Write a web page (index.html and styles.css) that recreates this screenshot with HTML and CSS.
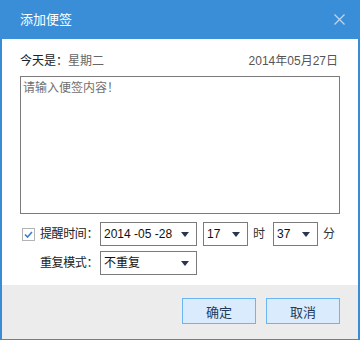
FILE: index.html
```html
<!DOCTYPE html>
<html lang="zh-CN">
<head>
  <meta charset="UTF-8" />
  <meta name="viewport" content="width=device-width, initial-scale=1.0"/>
  <title>添加便签</title>
  <link rel="stylesheet" href="styles.css">
</head>
<body>
  <div class="dialog">
    <div class="titleBar">
      <span class="titleText">添加便签</span>
      <svg class="closeIcon" width="11" height="11" viewBox="0 0 11 11">
        <path d="M0.5 0.5 L10.5 10.5 M10.5 0.5 L0.5 10.5" stroke="#bcd8f4" stroke-width="1.2" fill="none"/>
      </svg>
    </div>

    <div class="content">
      <div class="todayRow">
        <span><span class="todayLabel">今天是：</span><span class="weekday">星期二</span></span>
        <span class="todayDate">2014年05月27日</span>
      </div>

      <textarea class="noteInput" placeholder="请输入便签内容！"></textarea>

      <div class="formRow">
        <span class="checkBox">
          <svg width="11" height="11" viewBox="0 0 11 11">
            <path d="M2 5.5 L4.5 8 L9 3" stroke="#3b7fd0" stroke-width="1.6" fill="none"/>
          </svg>
        </span>
        <span class="fieldLabel">提醒时间：</span>
        <div class="select dateSelect"><span>2014 -05 -28</span><span class="arrow"></span></div>
        <div class="select smallSelect"><span>17</span><span class="arrow"></span></div>
        <span class="unit">时</span>
        <div class="select smallSelect"><span>37</span><span class="arrow"></span></div>
        <span class="unit">分</span>
      </div>

      <div class="formRow indented">
        <span class="fieldLabel">重复模式：</span>
        <div class="select dateSelect"><span>不重复</span><span class="arrow"></span></div>
      </div>
    </div>

    <div class="footer">
      <button class="dlgBtn">确定</button>
      <button class="dlgBtn">取消</button>
    </div>
  </div>
</body>
</html>
```

FILE: styles.css
```css
body {
  margin: 0;
  font-family: "Liberation Sans", "Noto Sans CJK SC", sans-serif;
  font-size: 12px;
  color: #222;
  background: #fff;
}

.dialog {
  width: 360px;
  height: 340px;
  box-sizing: border-box;
  border: 2px solid #3a8bd6;
  border-top: 0;
  border-bottom-width: 1px;
  display: flex;
  flex-direction: column;
  background: #fff;
}

.titleBar {
  height: 39px;
  margin: 0 -2px;
  background: #3a8ed8;
  display: flex;
  align-items: center;
  justify-content: space-between;
  padding: 0 15px 0 20px;
}

.titleText {
  color: #fff;
  font-size: 13px;
  line-height: 18px;
}

.closeIcon {
  display: block;
}

.content {
  flex: 1;
  padding: 0 18px;
  display: flex;
  flex-direction: column;
}

.todayRow {
  margin-top: 13px;
  height: 18px;
  line-height: 18px;
  display: flex;
  justify-content: space-between;
  align-items: center;
}

.todayLabel {
  color: #222;
}

.weekday {
  color: #666;
}

.todayDate {
  color: #555;
  font-size: 12px;
  padding-right: 2px;
}

.noteInput {
  margin-top: 6px;
  width: 320px;
  height: 138px;
  box-sizing: border-box;
  border: 1px solid #7b7b7b;
  padding: 3px 2px;
  font-family: inherit;
  font-size: 12px;
  line-height: 16px;
  resize: none;
  outline: none;
}

.noteInput::placeholder {
  color: #707070;
}

.formRow {
  display: flex;
  align-items: center;
  height: 24px;
  margin-top: 8px;
  white-space: nowrap;
}

.formRow.indented {
  margin-top: 5px;
  padding-left: 20px;
}

.checkBox {
  flex-shrink: 0;
  width: 13px;
  height: 13px;
  box-sizing: border-box;
  border: 1px solid #b3b3b3;
  margin-left: 2px;
  margin-right: 5px;
  display: flex;
  align-items: center;
  justify-content: center;
}

.checkBox svg {
  display: block;
}

.fieldLabel {
  flex-shrink: 0;
  width: 60px;
  color: #222;
  line-height: 18px;
  letter-spacing: -0.4px;
}

.select {
  flex-shrink: 0;
  height: 24px;
  box-sizing: border-box;
  border: 1px solid #7b7b7b;
  display: flex;
  align-items: center;
  justify-content: space-between;
  padding: 0 7px 0 3px;
  color: #111;
  line-height: 18px;
}

.dateSelect {
  width: 97px;
}

.smallSelect {
  width: 45px;
  margin-left: 6px;
}

.arrow {
  width: 0;
  height: 0;
  border-left: 4px solid transparent;
  border-right: 4px solid transparent;
  border-top: 5px solid #2a3650;
}

.unit {
  margin: 0 8px 0 5px;
  color: #333;
  line-height: 18px;
}

.unit + .smallSelect {
  margin-left: 0;
}

.footer {
  height: 54px;
  background: #ececec;
  display: flex;
  justify-content: flex-end;
  align-items: flex-start;
  gap: 10px;
  padding: 13px 18px 0 0;
  box-sizing: border-box;
}

.dlgBtn {
  width: 74px;
  height: 26px;
  background: #d9ebfc;
  border: 1px solid #6ab6f5;
  color: #1c3b5c;
  font-family: inherit;
  font-size: 13px;
  padding: 0;
  cursor: pointer;
}
```
